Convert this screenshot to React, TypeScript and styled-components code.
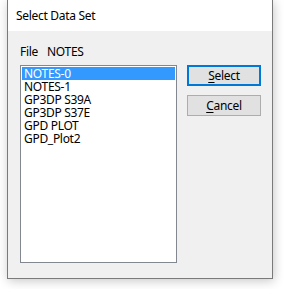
import styled, { createGlobalStyle } from 'styled-components';

const GlobalStyle = createGlobalStyle`
  html, body {
    margin: 0;
    padding: 0;
    background: #ffffff;
  }
  body {
    font-family: "Noto Sans", sans-serif;
    font-size: 12px;
    letter-spacing: -0.3px;
    color: #000;
  }
`;

const Page = styled.div`
  width: 284px;
  height: 289px;
  padding-left: 7px;
  box-sizing: border-box;
  overflow: hidden;
`;

const Window = styled.div`
  width: 266px;
  height: 279px;
  box-sizing: border-box;
  border: 1px solid #7a7a7a;
  border-top: none;
  background: #f0f0f0;
  display: flex;
  flex-direction: column;
  box-shadow: 1px 2px 10px rgba(0, 0, 0, 0.22);
`;

const TitleBar = styled.div`
  height: 31px;
  flex: none;
  background: #ffffff;
  display: flex;
  align-items: center;
  padding-left: 8px;
  line-height: 16px;
`;

const Body = styled.div`
  flex: 1;
  padding: 14px 0 0 12px;
  display: flex;
  flex-direction: column;
`;

const FileRow = styled.div`
  display: flex;
  gap: 9px;
  height: 14px;
  line-height: 14px;
  margin-bottom: 6px;
`;

const Main = styled.div`
  display: flex;
  gap: 10px;
`;

const ListBox = styled.div`
  width: 157px;
  height: 198px;
  box-sizing: border-box;
  border: 1px solid #828790;
  background: #ffffff;
  padding: 1px;
  display: flex;
  flex-direction: column;
`;

const Item = styled.div<{ selected?: boolean }>`
  height: 13px;
  line-height: 13px;
  padding-left: 2px;
  white-space: nowrap;
  background: ${p => (p.selected ? '#3399ff' : 'transparent')};
  color: ${p => (p.selected ? '#ffffff' : '#000000')};
`;

const Buttons = styled.div`
  display: flex;
  flex-direction: column;
  gap: 9px;
`;

const Button = styled.div<{ primary?: boolean }>`
  width: 74px;
  height: 21px;
  box-sizing: border-box;
  border: ${p => (p.primary ? '2px solid #0078d7' : '1px solid #adadad')};
  background: #e1e1e1;
  display: flex;
  align-items: center;
  justify-content: center;
  line-height: 14px;

  u {
    text-decoration-thickness: 1px;
    text-underline-offset: 2px;
  }
`;

const items = ['NOTES-0', 'NOTES-1', 'GP3DP S39A', 'GP3DP S37E', 'GPD PLOT', 'GPD_Plot2'];

export default function App() {
  return (
    <Page>
      <GlobalStyle />
      <Window>
        <TitleBar>Select Data Set</TitleBar>
        <Body>
          <FileRow>
            <span>File</span>
            <span>NOTES</span>
          </FileRow>
          <Main>
            <ListBox>
              {items.map((it, i) => (
                <Item key={it} selected={i === 0}>
                  {it}
                </Item>
              ))}
            </ListBox>
            <Buttons>
              <Button primary>
                <span>
                  <u>S</u>elect
                </span>
              </Button>
              <Button>
                <span>
                  <u>C</u>ancel
                </span>
              </Button>
            </Buttons>
          </Main>
        </Body>
      </Window>
    </Page>
  );
}
